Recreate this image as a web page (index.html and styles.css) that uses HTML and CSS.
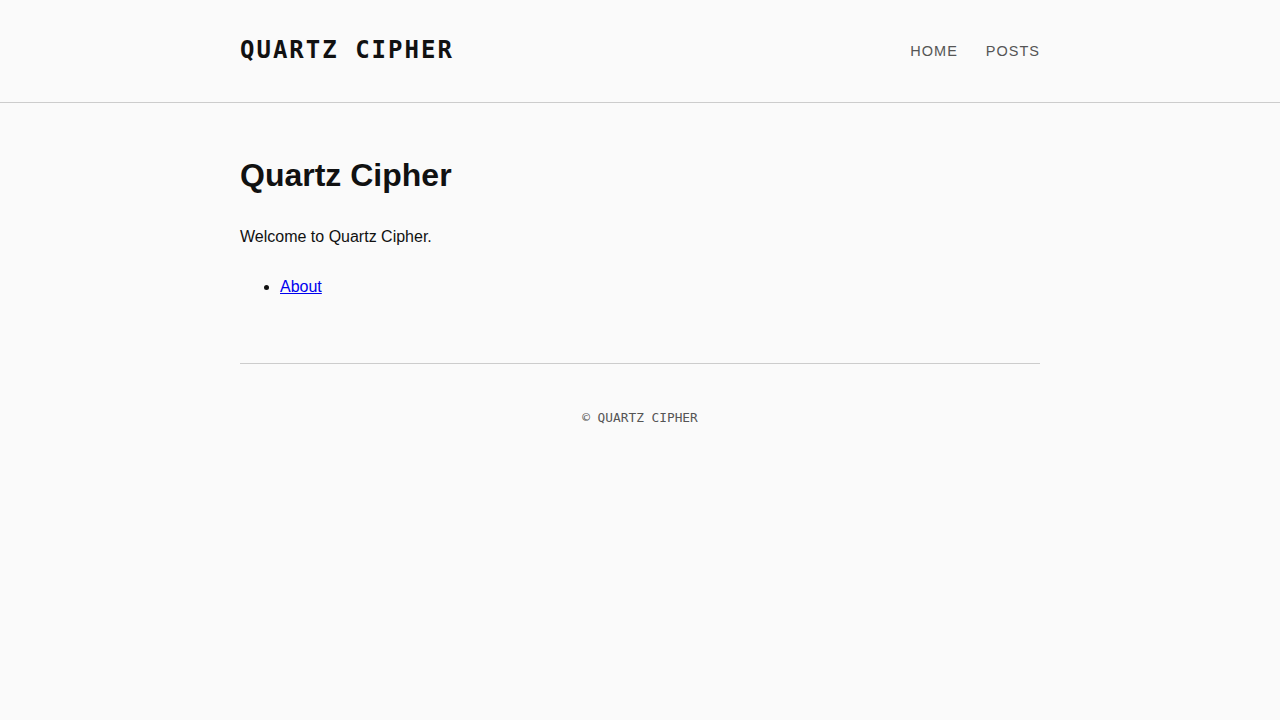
FILE: index.html
```html
<!DOCTYPE html>
<html lang="en">
<head>
<meta charset="utf-8">
<title>Quartz Cipher</title>
<link rel="stylesheet" href="styles.css">
</head>
<body>
<header class="site-header">
  <div class="wrap header-inner">
    <a class="brand" href="#">QUARTZ CIPHER</a>
    <nav class="nav">
      <a href="#">HOME</a>
      <a href="#">POSTS</a>
    </nav>
  </div>
</header>
<main class="wrap main">
  <h1>Quartz Cipher</h1>
  <p>Welcome to Quartz Cipher.</p>
  <ul>
    <li><a href="#">About</a></li>
  </ul>
</main>
<footer class="wrap footer">
  <p>© QUARTZ CIPHER</p>
</footer>
</body>
</html>
```
FILE: styles.css
```css
html, body {
  margin: 0;
  padding: 0;
  background: #fafafa;
  color: #111;
  font-family: "Liberation Sans", Arial, sans-serif;
  font-size: 16px;
  line-height: 1.6;
}
.wrap {
  width: 800px;
  margin: 0 auto;
}
.site-header {
  border-bottom: 1px solid #cccccc;
}
.header-inner {
  height: 102px;
  display: flex;
  align-items: center;
  justify-content: space-between;
}
.brand {
  font-family: "DejaVu Sans Mono", monospace;
  font-weight: bold;
  font-size: 24px;
  letter-spacing: 2px;
  color: #111;
  text-decoration: none;
  line-height: 1;
  margin-top: -2px;
}
.nav {
  display: flex;
  gap: 29px;
  margin-right: 1px;
}
.nav a {
  font-size: 14.5px;
  letter-spacing: 1px;
  color: #555;
  text-decoration: none;
  margin-right: -1px;
  line-height: 1;
}
.main {
  padding: 53px 0 63px;
}
.main h1 {
  font-size: 32px;
  line-height: 1.2;
  margin: 0 0 30px;
}
.main p {
  margin: 0 0 24px;
}
.main ul {
  margin: 0;
  padding-left: 40px;
}
.main a {
  color: #0000ee;
}
.footer {
  border-top: 1px solid #cccccc;
  padding-top: 44px;
  text-align: center;
}
.footer p {
  margin: 0;
  font-family: "DejaVu Sans Mono", monospace;
  font-size: 12.8px;
  color: #555;
}
```
